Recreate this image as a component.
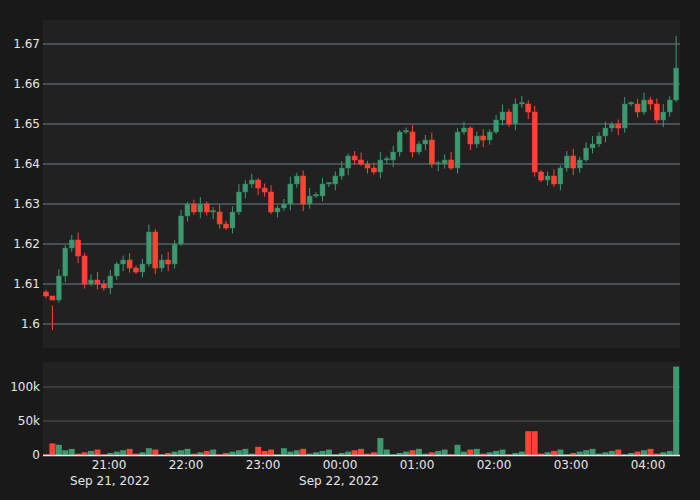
import React from 'react';

const closes = [
  1.607, 1.606, 1.612, 1.619, 1.621, 1.617, 1.61, 1.611, 1.61, 1.609, 1.612, 1.615, 1.616, 1.614, 1.613, 1.615,
  1.623, 1.614, 1.616, 1.615, 1.62, 1.627, 1.63, 1.628, 1.63, 1.628, 1.628, 1.625, 1.624, 1.628, 1.633, 1.635,
  1.636, 1.634, 1.633, 1.628, 1.629, 1.63, 1.635, 1.637, 1.63, 1.632, 1.632, 1.635, 1.635, 1.637, 1.639, 1.642,
  1.641, 1.64, 1.639, 1.638, 1.641, 1.641, 1.643, 1.648, 1.648, 1.643, 1.645, 1.646, 1.64, 1.64, 1.641, 1.639,
  1.648, 1.649, 1.645, 1.647, 1.646, 1.648, 1.651, 1.653, 1.65, 1.655, 1.655, 1.653, 1.638, 1.636, 1.637, 1.635,
  1.639, 1.642, 1.639, 1.641, 1.644, 1.645, 1.647, 1.649, 1.65, 1.649, 1.655, 1.655, 1.653, 1.656, 1.655, 1.651,
  1.653, 1.656, 1.664,
];
const bigVol: Record<number, number> = { 1: 17, 2: 15, 52: 25, 64: 15, 75: 35, 76: 35, 98: 130, 16: 10, 33: 12, 37: 10, 66: 8 };
const GREEN = '#3d9a70';
const RED = '#ff4136';

const candles = closes.map((c, i) => {
  const o = i === 0 ? 1.608 : closes[i - 1];
  const r = ((i * 37) % 11) / 10;
  const hi = Math.max(o, c) + 0.0005 + r * 0.0015;
  const lo = Math.min(o, c) - 0.0005 - ((i * 53) % 7) / 7 * 0.0015;
  const v = bigVol[i] ?? 1 + ((i * 29) % 9);
  return { o, c: c === o ? c + 0.0004 : c, hi: i === 98 ? 1.672 : i === 1 ? 1.5985 : hi, lo, v };
});

const x = (i: number) => 3 + i * 6.43;
const py = (p: number) => 304 - (p - 1.6) * 4000;
const vy = (v: number) => 93 - v * 0.68;

export default function App() {
  const font = { fontFamily: '"DejaVu Sans", sans-serif' };
  return (
    <div className="w-[700px] h-[500px] bg-[#191919] text-[#e6e6e6] text-[12px] relative" style={font}>
      <div className="absolute left-[43px] top-[20px] w-[637px] h-[328px] bg-[#212121]">
        <svg width="637" height="328" className="overflow-visible">
          {[1.6, 1.61, 1.62, 1.63, 1.64, 1.65, 1.66, 1.67].map((p) => (
            <g key={p}>
              <line x1="0" x2="637" y1={py(p)} y2={py(p)} stroke="#6d7d8d" strokeWidth="1" />
              <text x="-3" y={py(p) + 4} textAnchor="end" fill="#e6e6e6" fontSize="12">{p === 1.6 ? '1.6' : p.toFixed(2)}</text>
            </g>
          ))}
          {candles.map((k, i) => {
            const col = k.c >= k.o ? GREEN : RED;
            const top = py(Math.max(k.o, k.c));
            const h = Math.max(1, py(Math.min(k.o, k.c)) - top);
            return (
              <g key={i}>
                <line x1={x(i)} x2={x(i)} y1={py(k.hi)} y2={py(k.lo)} stroke={col} strokeWidth="1" />
                <rect x={x(i) - 2.5} y={top} width="5" height={h} fill={col} stroke={col === GREEN ? '#2c7755' : RED} strokeWidth="0.5" />
              </g>
            );
          })}
        </svg>
      </div>
      <div className="absolute left-[43px] top-[362px] w-[637px] h-[94px] bg-[#212121]">
        <svg width="637" height="94" className="overflow-visible">
          {[50, 100].map((v) => (
            <line key={v} x1="0" x2="637" y1={vy(v)} y2={vy(v)} stroke="#50555b" strokeWidth="1" />
          ))}
          {[0, 50, 100].map((v) => (
            <text key={v} x="-3" y={vy(v) + 4} textAnchor="end" fill="#e6e6e6" fontSize="12">{v === 0 ? '0' : `${v}k`}</text>
          ))}
          {candles.map((k, i) => (
            <rect key={i} x={x(i) - 3} y={vy(k.v)} width="6" height={93 - vy(k.v)} fill={k.c >= k.o ? GREEN : RED} />
          ))}
          <line x1="0" x2="637" y1="93.5" y2="93.5" stroke="#e6e6e6" strokeWidth="1.5" />
          {['21:00', '22:00', '23:00', '00:00', '01:00', '02:00', '03:00', '04:00'].map((t, i) => (
            <text key={t} x={66 + i * 77} y="107" textAnchor="middle" fill="#e6e6e6" fontSize="12">{t}</text>
          ))}
          <text x="67" y="123" textAnchor="middle" fill="#e6e6e6" fontSize="12">Sep 21, 2022</text>
          <text x="296" y="123" textAnchor="middle" fill="#e6e6e6" fontSize="12">Sep 22, 2022</text>
        </svg>
      </div>
    </div>
  );
}
